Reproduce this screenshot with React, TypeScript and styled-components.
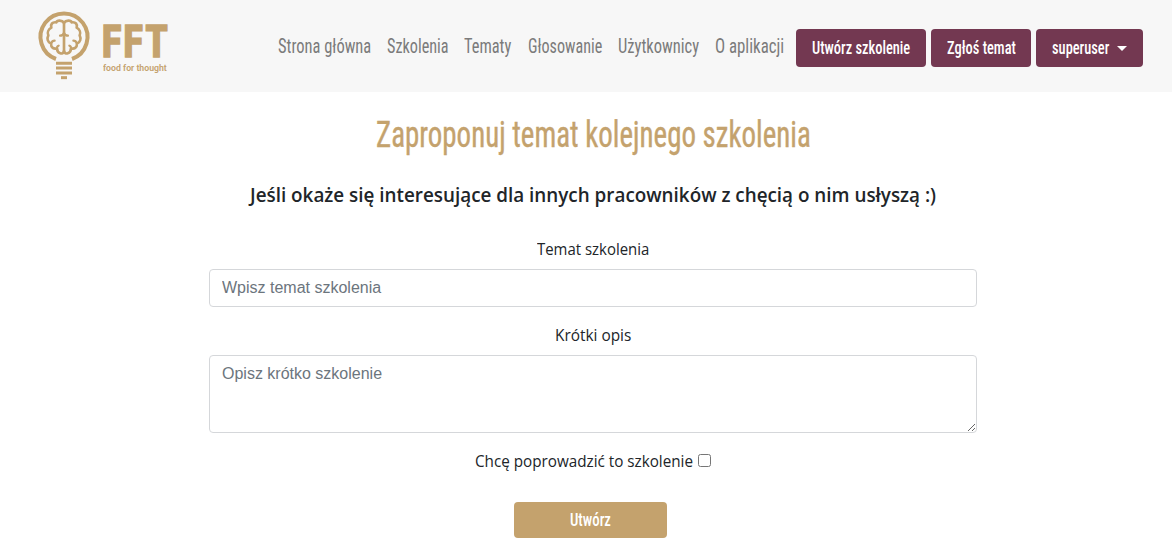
import React, { useLayoutEffect, useRef, useState } from "react";
import styled, { createGlobalStyle } from "styled-components";

const gold = "#c4a26d";
const plum = "#733851";

const GlobalStyle = createGlobalStyle`
  *, *::before, *::after { box-sizing: border-box; }
  body {
    margin: 0;
    background: #fff;
    color: #212529;
    font: 400 16px/24px "Open Sans", "Noto Sans", sans-serif;
    overflow: hidden;
  }
`;

const FitBox = styled.span<{ $width: number }>`
  display: inline-block;
  flex: none;
  width: ${(p) => p.$width}px;
  text-align: left;
  white-space: nowrap;
`;

const FitText = styled.span`
  display: inline-block;
  transform-origin: 0 50%;
`;

/* Sets a line of text in exactly the given measure. */
function Fit({ width, children }: { width: number; children: string }) {
  const ref = useRef<HTMLSpanElement>(null);
  const [scale, setScale] = useState(1);
  useLayoutEffect(() => {
    if (ref.current) setScale(width / ref.current.offsetWidth);
  }, [width, children]);
  return (
    <FitBox $width={width}>
      <FitText ref={ref} style={{ transform: `scaleX(${scale})` }}>
        {children}
      </FitText>
    </FitBox>
  );
}

const Header = styled.header`
  display: flex;
  align-items: flex-start;
  height: 92px;
  padding: 0 29px 0 34px;
  background: #f7f7f7;
`;

const Brand = styled.a`
  display: flex;
  gap: 6px;
  padding-top: 6px;
  color: ${gold};
`;

const Wordmark = styled.div`
  display: flex;
  flex-direction: column;
  padding-top: 13px;
  font-family: Roboto, sans-serif;
`;

const BrandName = styled.div`
  height: 43px;
  font-size: 45px;
  line-height: 46px;
  font-weight: 900;
  letter-spacing: 3px;
  -webkit-text-stroke: 1.4px ${gold};
`;

const Tagline = styled.div`
  padding-left: 1px;
  font-size: 9px;
  line-height: 12px;
  font-weight: 600;
`;

const Nav = styled.nav`
  display: flex;
  align-items: center;
  gap: 16px;
  height: 92px;
  margin-left: auto;
  margin-right: 12.5px;
`;

const NavLink = styled.a`
  display: flex;
  color: #7b7b7b;
  font: 400 20px/30px Roboto, sans-serif;
  font-stretch: 75%;
`;

const Actions = styled.div`
  display: flex;
  gap: 5px;
  padding-top: 29px;
`;

const Button = styled.button<{ $width: number; $height: number; $color: string }>`
  display: flex;
  align-items: center;
  justify-content: center;
  gap: 8px;
  width: ${(p) => p.$width}px;
  height: ${(p) => p.$height}px;
  padding: 0;
  border: 0;
  border-radius: 4px;
  background: ${(p) => p.$color};
  color: #fff;
  font: 500 18px/24px Roboto, sans-serif;
  font-stretch: 75%;
`;

const Caret = styled.span`
  border: 5px solid transparent;
  border-top-color: #fff;
  border-bottom: 0;
`;

const Main = styled.main`
  display: flex;
  flex-direction: column;
  align-items: center;
  width: 768px;
  margin-left: 209px;
`;

const Title = styled.h1`
  display: flex;
  margin: 19px 0 0;
  color: ${gold};
  font: 400 36px/48px Roboto, sans-serif;
  font-stretch: 75%;
  -webkit-text-stroke: 0.4px ${gold};
`;

const Lead = styled.h2`
  display: flex;
  margin: 24px 0 0;
  font-size: 20px;
  line-height: 24px;
  font-weight: 550;
`;

const Form = styled.form`
  display: flex;
  flex-direction: column;
  align-items: center;
  width: 100%;
  padding-top: 30px;
`;

const Label = styled.label`
  display: flex;
  align-items: center;
  height: 24px;
  margin-bottom: 8px;
`;

const Input = styled.input`
  width: 100%;
  height: 38px;
  margin: 0 0 16px;
  padding: 6px 12px;
  border: 1px solid #d5d7da;
  border-radius: 4px;
  outline: 0;
  background: #fff;
  font: 16px/24px "Liberation Sans", Arial, sans-serif;
  &::placeholder { color: #6c757d; opacity: 1; }
`;

const Textarea = styled(Input).attrs({ as: "textarea" })`
  display: block;
  height: 78px;
  resize: vertical;
`;

const CheckLabel = styled(Label)`
  gap: 5px;
  margin-bottom: 29px;
`;

const Checkbox = styled.input`
  width: 13px;
  height: 13px;
  margin: 0 0 2px;
`;

const SubmitRow = styled.div`
  padding-right: 5px;
`;

function Bulb() {
  return (
    <svg width="62" height="78" viewBox="0 0 186 234" fill="none" stroke="currentColor" strokeLinecap="round" strokeLinejoin="round">
      <path d="M66 159 A70.500 70.500 0 1 1 114 159" strokeWidth="12" strokeLinecap="butt" />
      <g strokeWidth="8">
        <path d="M90 50 C84 42 69 42 67 49 C55 47 49 55 52 65 C43 70 39 80 43 88 C38 98 41 108 51 113 C51 125 59 130 69 127 C70 144 87 147 90 136" />
        <path d="M90 50 C96 42 111 42 113 49 C125 47 131 55 128 65 C137 70 141 80 137 88 C142 98 139 108 129 113 C129 125 121 130 111 127 C110 144 93 147 90 136" />
        <path d="M90 52 V137" />
      </g>
      <g strokeWidth="6.5">
        <path d="M78 89 Q87 89 90 81 Q93 89 102 89" />
        <path d="M52 112 Q54 104 62 104 M128 112 Q126 104 118 104" />
        <path d="M69 127 Q68 121 74 119 M111 127 Q112 121 106 119" />
      </g>
      <path d="M66 171.500 H114 M66 186 H114 M66 201 H114" strokeWidth="9" strokeLinecap="butt" />
      <path d="M81 215 H99" strokeWidth="9" strokeLinecap="butt" />
    </svg>
  );
}

const links: [string, number][] = [
  ["Strona główna", 93],
  ["Szkolenia", 61.5],
  ["Tematy", 47.5],
  ["Głosowanie", 74],
  ["Użytkownicy", 81],
  ["O aplikacji", 69],
];

export default function App() {
  return (
    <>
      <GlobalStyle />
      <Header>
        <Brand>
          <Bulb />
          <Wordmark>
            <BrandName><Fit width={68}>FFT</Fit></BrandName>
            <Tagline><Fit width={64}>food for thought</Fit></Tagline>
          </Wordmark>
        </Brand>
        <Nav>
          {links.map(([text, width]) => (
            <NavLink key={text}><Fit width={width}>{text}</Fit></NavLink>
          ))}
        </Nav>
        <Actions>
          <Button $width={130} $height={38} $color={plum}><Fit width={98}>Utwórz szkolenie</Fit></Button>
          <Button $width={100} $height={38} $color={plum}><Fit width={69}>Zgłoś temat</Fit></Button>
          <Button $width={107} $height={38} $color={plum}><Fit width={57}>superuser</Fit><Caret /></Button>
        </Actions>
      </Header>
      <Main>
        <Title><Fit width={435}>Zaproponuj temat kolejnego szkolenia</Fit></Title>
        <Lead><Fit width={686}>Jeśli okaże się interesujące dla innych pracowników z chęcią o nim usłyszą :)</Fit></Lead>
        <Form>
          <Label htmlFor="topic"><Fit width={112}>Temat szkolenia</Fit></Label>
          <Input id="topic" placeholder="Wpisz temat szkolenia" />
          <Label htmlFor="summary"><Fit width={76}>Krótki opis</Fit></Label>
          <Textarea id="summary" placeholder="Opisz krótko szkolenie" />
          <CheckLabel><Fit width={218}>Chcę poprowadzić to szkolenie</Fit><Checkbox type="checkbox" /></CheckLabel>
          <SubmitRow>
            <Button type="button" $width={153} $height={36} $color={gold}><Fit width={41}>Utwórz</Fit></Button>
          </SubmitRow>
        </Form>
      </Main>
    </>
  );
}
